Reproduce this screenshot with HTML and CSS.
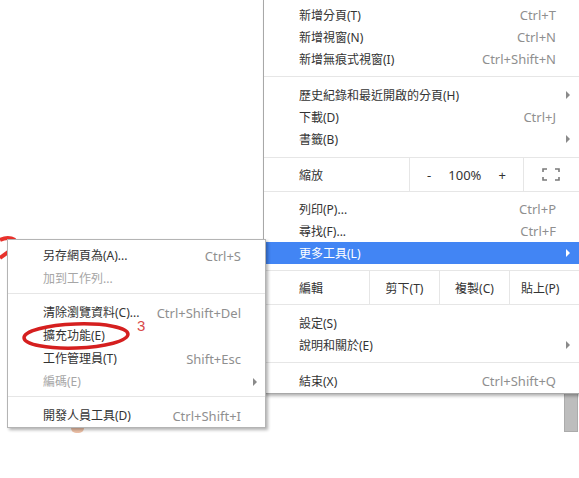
FILE: index.html
```html
<!DOCTYPE html>
<html lang="zh-Hant">
<head>
    <meta charset="UTF-8">
    <meta name="viewport" content="width=device-width, initial-scale=1.0">
    <title>Chrome 選單</title>
    <link rel="stylesheet" href="styles.css">
</head>
<body>
    <div class="stage">
        <!-- bits of the page under the menus -->
        <svg class="mark-2" width="20" height="32" viewBox="0 0 20 32">
            <path d="M0 9 Q8 5 15 9" fill="none" stroke="#e8322c" stroke-width="4"/>
            <path d="M0 27 L15 16" fill="none" stroke="#e8322c" stroke-width="4"/>
        </svg>
        <div class="blob"></div>
        <div class="scrollbar"></div>

        <div class="menu main-menu">
            <div class="item"><span class="label">新增分頁(T)</span><span class="key">Ctrl+T</span></div>
            <div class="item"><span class="label">新增視窗(N)</span><span class="key">Ctrl+N</span></div>
            <div class="item"><span class="label">新增無痕式視窗(I)</span><span class="key">Ctrl+Shift+N</span></div>
            <div class="sep"></div>
            <div class="item"><span class="label">歷史紀錄和最近開啟的分頁(H)</span><span class="arrow"></span></div>
            <div class="item"><span class="label">下載(D)</span><span class="key">Ctrl+J</span></div>
            <div class="item"><span class="label">書籤(B)</span><span class="arrow"></span></div>
            <div class="zoom-row">
                <div class="cell first">縮放</div>
                <div class="cell zoom-ctrl"><span>-</span><span>100%</span><span>+</span></div>
                <div class="cell fullscreen">
                    <svg width="18" height="13" viewBox="0 0 18 13">
                        <path d="M1 4V1H5M13 1H17V4M17 9V12H13M5 12H1V9" fill="none" stroke="#7a7a7a" stroke-width="1.6"/>
                    </svg>
                </div>
            </div>
            <div class="item"><span class="label">列印(P)...</span><span class="key">Ctrl+P</span></div>
            <div class="item"><span class="label">尋找(F)...</span><span class="key">Ctrl+F</span></div>
            <div class="item active"><span class="label">更多工具(L)</span><span class="arrow"></span></div>
            <div class="edit-row">
                <div class="cell first">編輯</div>
                <div class="cell center">剪下(T)</div>
                <div class="cell center">複製(C)</div>
                <div class="cell center">貼上(P)</div>
            </div>
            <div class="item"><span class="label">設定(S)</span></div>
            <div class="item"><span class="label">說明和關於(E)</span><span class="arrow"></span></div>
            <div class="sep"></div>
            <div class="item"><span class="label">結束(X)</span><span class="key">Ctrl+Shift+Q</span></div>
        </div>

        <div class="menu sub-menu">
            <div class="item"><span class="label">另存網頁為(A)...</span><span class="key">Ctrl+S</span></div>
            <div class="item disabled"><span class="label">加到工作列...</span></div>
            <div class="sep"></div>
            <div class="item"><span class="label">清除瀏覽資料(C)...</span><span class="key">Ctrl+Shift+Del</span></div>
            <div class="item"><span class="label">擴充功能(E)</span></div>
            <div class="item"><span class="label">工作管理員(T)</span><span class="key">Shift+Esc</span></div>
            <div class="item disabled"><span class="label">編碼(E)</span><span class="arrow"></span></div>
            <div class="sep"></div>
            <div class="item"><span class="label">開發人員工具(D)</span><span class="key">Ctrl+Shift+I</span></div>
        </div>

        <!-- hand drawn note over the sub menu -->
        <svg class="circle-note" width="116" height="36" viewBox="0 0 116 36">
            <ellipse cx="57" cy="18" rx="52" ry="12" fill="none" stroke="#d51f1f" stroke-width="3.5" transform="rotate(-2 57 18)"/>
        </svg>
        <span class="step">3</span>
    </div>
</body>
</html>
```

FILE: styles.css
```css
body {
    margin: 0;
    background-color: white;
    font-family: "Noto Sans", "Noto Sans CJK TC", sans-serif;
    font-size: 12px;
    color: #333;
    overflow: hidden;
}
.stage {
    position: relative;
    width: 579px;
    height: 478px;
    overflow: hidden;
}
.mark-2 {
    position: absolute;
    left: 0;
    top: 231px;
}
.blob {
    position: absolute;
    left: 71px;
    top: 428px;
    width: 13px;
    height: 5px;
    border-radius: 0 0 7px 7px;
    background-color: #efc2a8;
}
.scrollbar {
    position: absolute;
    left: 564px;
    top: 390px;
    width: 12px;
    height: 40px;
    background-color: #bdbdbd;
    border: 1px solid #ababab;
}
.menu {
    position: absolute;
    background-color: white;
    border: 1px solid #a8a8a8;
    box-shadow: 2px 2px 3px rgba(0,0,0,0.3);
}
.main-menu {
    left: 263px;
    top: -1px;
    width: 330px;
    padding: 4px 0 1px;
}
.sub-menu {
    left: 7px;
    top: 239px;
    width: 257px;
    padding: 4px 0 0;
    border-color: #b4b4b4;
}
.item {
    display: flex;
    align-items: center;
    height: 22px;
    padding: 0 38px 0 35px;
}
.sub-menu .item {
    height: 23px;
    padding: 0 24px 0 35px;
}
.label {
    flex: 1;
    white-space: nowrap;
}
.sub-menu .label {
    line-height: 12px;
}
.key {
    font-size: 13px;
    color: #8f8f8f;
}
.disabled {
    color: #a6a6a6;
}
.arrow {
    width: 0;
    height: 0;
    margin-right: -14px;
    border-top: 4px solid transparent;
    border-bottom: 4px solid transparent;
    border-left: 4px solid #8a8a8a;
}
.sub-menu .arrow {
    margin-right: -16px;
}
.active {
    background-color: #4285f4;
    color: white;
}
.active .arrow {
    border-left-color: white;
}
.sep {
    height: 1px;
    margin: 6px 0 7px;
    background-color: #e6e6e6;
}
.sub-menu .sep {
    margin: 3px 0 7px;
}
.zoom-row, .edit-row {
    display: grid;
    height: 33px;
    border-top: 1px solid #e6e6e6;
    border-bottom: 1px solid #e6e6e6;
}
.zoom-row {
    grid-template-columns: 145px 114px 1fr;
    margin: 7px 0 6px;
}
.edit-row {
    grid-template-columns: 105px 70px 70px 1fr;
    margin: 6px 0 7px;
}
.cell {
    display: flex;
    align-items: center;
    border-left: 1px solid #e6e6e6;
}
.cell.first {
    padding-left: 35px;
    border-left: none;
}
.cell.center {
    justify-content: center;
}
.edit-row .cell:last-child {
    justify-content: flex-start;
    padding-left: 11px;
}
.zoom-ctrl {
    justify-content: space-evenly;
    font-size: 13px;
}
.fullscreen {
    padding-left: 18px;
}
.circle-note {
    position: absolute;
    left: 19px;
    top: 318px;
}
.step {
    position: absolute;
    left: 137px;
    top: 320px;
    font-family: "Liberation Sans", sans-serif;
    font-size: 15px;
    line-height: 12px;
    color: #d94a4a;
}
```
